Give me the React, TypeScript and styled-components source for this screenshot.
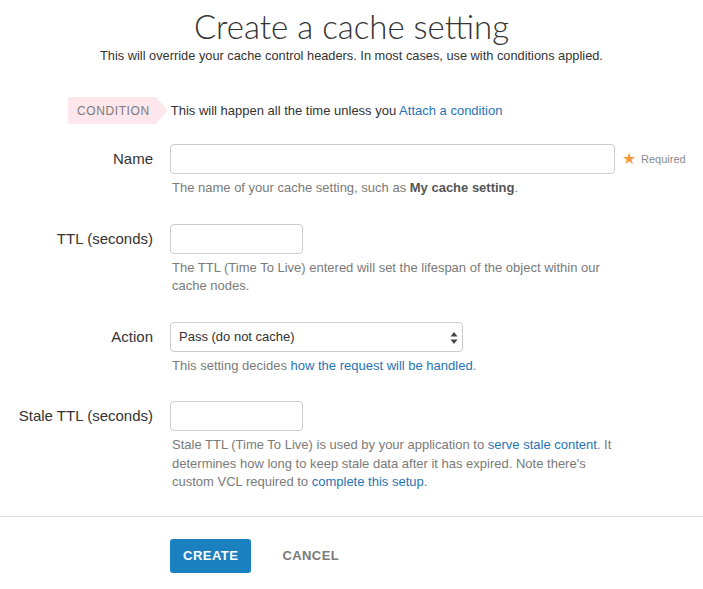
import styled, { createGlobalStyle } from 'styled-components';

const GlobalStyle = createGlobalStyle`
  html, body {
    margin: 0;
    padding: 0;
    background: #fff;
  }
  body {
    font-family: "Liberation Sans", Arial, sans-serif;
    color: #333;
  }
  * { box-sizing: border-box; }
`

const Page = styled.div`
  width: 703px;
  padding-top: 5px;
`

const Header = styled.header`
  text-align: center;
  h1 {
    margin: 0;
    font-family: Lato, "Open Sans", sans-serif;
    font-weight: 300;
    font-size: 33px;
    line-height: 42px;
    color: #333;
  }
  p {
    margin: 0;
    font-size: 12.8px;
    line-height: 18px;
    color: #333;
  }
`

const ConditionRow = styled.div`
  display: flex;
  align-items: center;
  gap: 3px;
  margin: 32px 0 20px 68px;
  font-size: 13px;
`

const ConditionTag = styled.span`
  display: inline-flex;
  align-items: center;
  height: 27px;
  padding: 0 18px 0 9px;
  background: #fde6ec;
  color: #7b7b7b;
  font-size: 12px;
  letter-spacing: 0.6px;
  border-radius: 3px 0 0 3px;
  clip-path: polygon(0 0, calc(100% - 12px) 0, 100% 50%, calc(100% - 12px) 100%, 0 100%);
`

const Link = styled.a`
  color: #1f74b5;
  text-decoration: none;
`

const Form = styled.form`
  display: grid;
  grid-template-columns: 153px 1fr;
  column-gap: 17px;
  row-gap: 26px;
`

const Label = styled.label`
  text-align: right;
  font-size: 15px;
  line-height: 30px;
  color: #333;
`

const Field = styled.div`
  display: flex;
  flex-direction: column;
`

const InputLine = styled.div`
  display: flex;
  align-items: center;
`

const TextInput = styled.input<{ $width: number }>`
  width: ${(p) => p.$width}px;
  height: 30px;
  border: 1px solid #ccc;
  border-radius: 4px;
  padding: 0 8px;
  font: inherit;
  font-size: 13px;
  background: #fff;
  outline: none;
`

const SelectBox = styled.div`
  position: relative;
  width: 293px;
  height: 30px;
  border: 1px solid #ccc;
  border-radius: 4px;
  display: flex;
  align-items: center;
  padding: 0 8px;
  font-size: 13px;
  color: #333;
  svg {
    position: absolute;
    right: 4px;
    top: 9px;
  }
`

const Required = styled.span`
  display: inline-flex;
  align-items: center;
  gap: 5px;
  margin-left: 7px;
  font-size: 11px;
  color: #8a8a8a;
  span {
    color: #f39a3c;
    font-size: 16px;
    line-height: 1;
  }
`

const Help = styled.p`
  margin: 5px 0 0 2px;
  max-width: 446px;
  font-size: 13px;
  line-height: 18.5px;
  color: #7a7a7a;
  strong {
    color: #555;
  }
`

const Divider = styled.hr`
  margin: 24px 0 0;
  border: none;
  border-top: 1px solid #dcdcdc;
`

const Actions = styled.div`
  display: flex;
  align-items: center;
  gap: 31px;
  padding: 22px 0 0 170px;
`

const PrimaryButton = styled.button`
  height: 34px;
  padding: 0 13px;
  background: #1a80c0;
  color: #fff;
  border: none;
  border-radius: 3px;
  font-family: "Liberation Sans", Arial, sans-serif;
  font-weight: 700;
  font-size: 13px;
  letter-spacing: 0.5px;
`

const TextButton = styled.button`
  background: none;
  border: none;
  padding: 0;
  color: #7a7a7a;
  font-family: "Liberation Sans", Arial, sans-serif;
  font-weight: 700;
  font-size: 13px;
  letter-spacing: 0.4px;
`

const Arrows = () => (
  <svg width="8" height="12" viewBox="0 0 8 12">
    <path d="M4 0 L7.5 4.5 H0.5 Z" fill="#444" />
    <path d="M4 12 L7.5 7.5 H0.5 Z" fill="#444" />
  </svg>
)

export default function App() {
  return (
    <Page>
      <GlobalStyle />
      <Header>
        <h1>Create a cache setting</h1>
        <p>This will override your cache control headers. In most cases, use with conditions applied.</p>
      </Header>

      <ConditionRow>
        <ConditionTag>CONDITION</ConditionTag>
        <span>This will happen all the time unless you <Link href="#">Attach a condition</Link></span>
      </ConditionRow>

      <Form onSubmit={(e) => e.preventDefault()}>
        <Label>Name</Label>
        <Field>
          <InputLine>
            <TextInput $width={445} type="text" />
            <Required><span>★</span>Required</Required>
          </InputLine>
          <Help>The name of your cache setting, such as <strong>My cache setting</strong>.</Help>
        </Field>

        <Label>TTL (seconds)</Label>
        <Field>
          <TextInput $width={133} type="text" />
          <Help>The TTL (Time To Live) entered will set the lifespan of the object within our cache nodes.</Help>
        </Field>

        <Label>Action</Label>
        <Field>
          <SelectBox>
            Pass (do not cache)
            <Arrows />
          </SelectBox>
          <Help>This setting decides <Link href="#">how the request will be handled</Link>.</Help>
        </Field>

        <Label>Stale TTL (seconds)</Label>
        <Field>
          <TextInput $width={133} type="text" />
          <Help>
            Stale TTL (Time To Live) is used by your application to <Link href="#">serve stale content</Link>. It
            determines how long to keep stale data after it has expired. Note there's custom VCL required
            to <Link href="#">complete this setup</Link>.
          </Help>
        </Field>
      </Form>

      <Divider />

      <Actions>
        <PrimaryButton>CREATE</PrimaryButton>
        <TextButton>CANCEL</TextButton>
      </Actions>
    </Page>
  )
}
